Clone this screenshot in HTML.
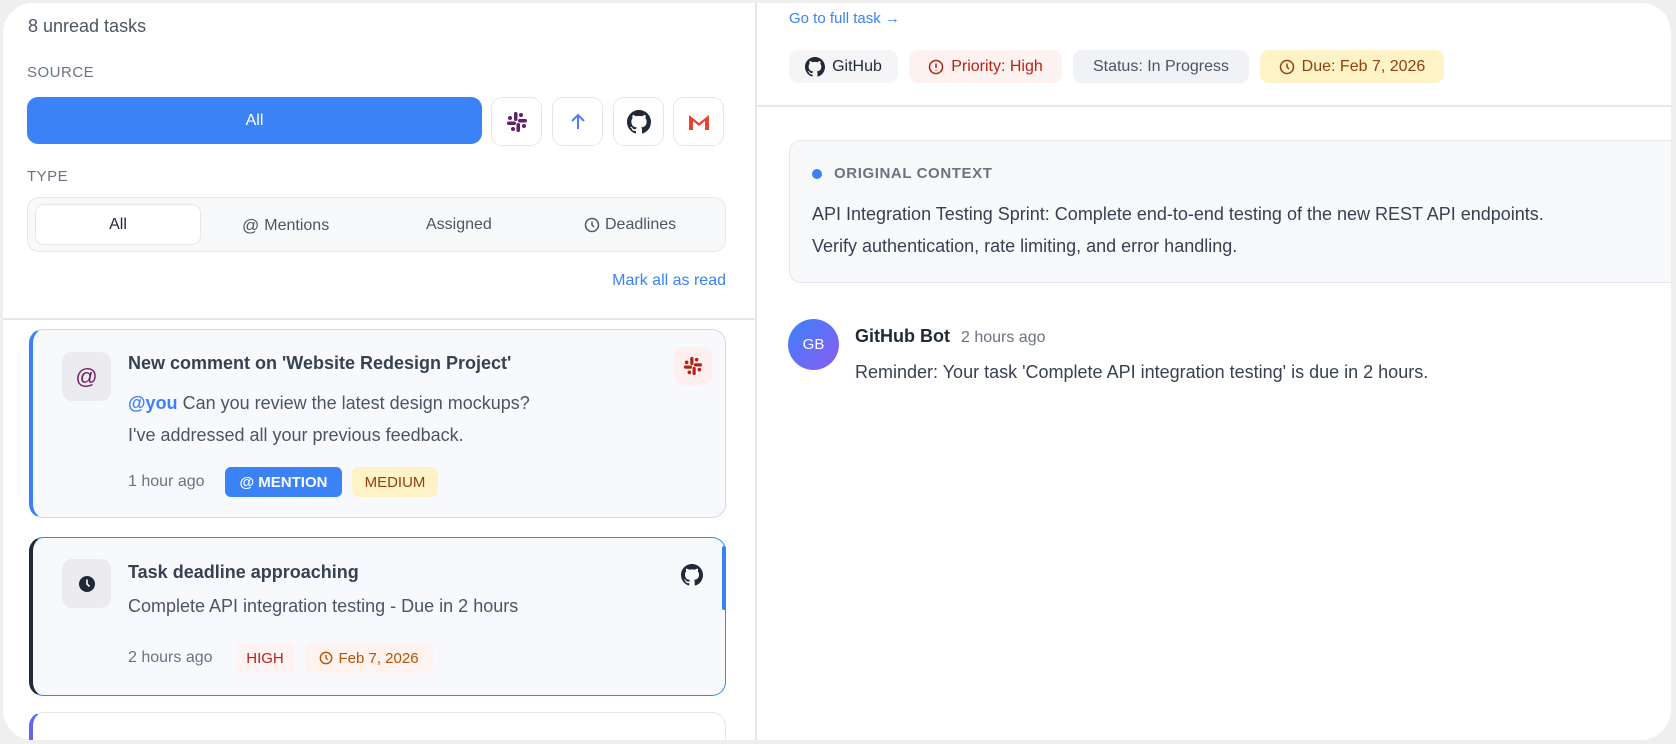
<!DOCTYPE html>
<html><head><meta charset="utf-8"><style>
*{box-sizing:border-box;margin:0;padding:0}
html,body{width:1676px;height:744px;overflow:hidden}
body{background:#efefef;font-family:"Liberation Sans",sans-serif;position:relative;color:#374151}
.frame{position:absolute;left:3px;top:3px;width:1668px;height:737px;background:#fff;border-radius:30px;overflow:hidden}
.a{position:absolute}
.lbl{font-size:15px;color:#6b7280;letter-spacing:.5px}
.ib{position:absolute;top:97px;width:51px;height:49px;border:1.5px solid #e5e7eb;border-radius:11px;background:#fff;display:flex;align-items:center;justify-content:center}
.seg{font-size:16px;color:#4b5563;position:absolute;top:216px;display:flex;align-items:center;gap:5px}
.card{position:absolute;left:26px;width:697px;border-radius:14px;background:#f7f9fd}
.t{font-size:18px;font-weight:bold;color:#374151}
.p{font-size:18px;color:#4b5563}
.badge{position:absolute;height:30px;border-radius:6px;font-size:15px;display:flex;align-items:center;justify-content:center;gap:5px}
.rb{position:absolute;top:50px;height:33px;border-radius:9px;font-size:16px;display:flex;align-items:center;justify-content:center;gap:7px}
</style></head><body>
<svg width="0" height="0" style="position:absolute"><defs><path id="gh" d="M8 0C3.58 0 0 3.58 0 8c0 3.54 2.29 6.53 5.47 7.59.4.07.55-.17.55-.38v-1.33c-2.23.48-2.7-1.07-2.7-1.07-.36-.92-.89-1.17-.89-1.17-.73-.5.05-.49.05-.49.8.06 1.23.83 1.23.83.71 1.23 1.87.87 2.33.67.07-.52.28-.87.5-1.07-1.78-.2-3.65-.89-3.65-3.95 0-.87.31-1.59.82-2.15-.08-.2-.36-1.02.08-2.12 0 0 .67-.21 2.2.82a7.6 7.6 0 0 1 4 0c1.53-1.04 2.2-.82 2.2-.82.44 1.1.16 1.92.08 2.12.51.56.82 1.27.82 2.15 0 3.07-1.87 3.75-3.65 3.95.29.25.54.73.54 1.48v2.2c0 .21.15.46.55.38A8 8 0 0 0 16 8c0-4.42-3.58-8-8-8z"/></defs></svg>
<div class="frame">
<div class="a" style="left:25px;top:13px;font-size:18px;color:#4b5563">8 unread tasks</div>
<div class="a lbl" style="left:24px;top:61px">SOURCE</div>
<div class="a" style="left:24px;top:94px;width:455px;height:47px;background:#3b82f6;border-radius:11px;color:#fff;font-size:16px;display:flex;align-items:center;justify-content:center">All</div>
</div>
<div class="ib" style="left:491px"><svg width="22" height="22" viewBox="0 0 22 22" fill="#611f69"><rect x="8" y="1" width="3.5" height="9" rx="1.7"/><rect x="12" y="8" width="9" height="3.5" rx="1.7"/><rect x="10.5" y="12" width="3.5" height="9" rx="1.7"/><rect x="1" y="10.5" width="9" height="3.5" rx="1.7"/><circle cx="15" cy="4" r="2"/><circle cx="18" cy="15" r="2"/><circle cx="7" cy="18" r="2"/><circle cx="4" cy="7" r="2"/></svg></div>
<div class="ib" style="left:552px"><svg width="20" height="20" viewBox="0 0 20 20" fill="none" stroke="#4f7cf7" stroke-width="2"><path d="M10 17V3M4 9l6-6 6 6"/></svg></div>
<div class="ib" style="left:613px"><svg width="24" height="24" viewBox="0 0 16 16" fill="#1f2937"><use href="#gh"/></svg></div>
<div class="ib" style="left:673px"><svg width="24" height="20" viewBox="0 0 24 20"><path d="M2 18V3l10 8 10-8v15h-4V9l-6 5-6-5v9z" fill="#ea4335"/></svg></div>
<div class="a lbl" style="left:27px;top:168px">TYPE</div>
<div class="a" style="left:27px;top:197px;width:699px;height:55px;background:#f8f9fb;border:1.5px solid #e5e7eb;border-radius:12px"></div>
<div class="a" style="left:35px;top:204px;width:166px;height:41px;background:#fff;border:1.5px solid #e5e7eb;border-radius:9px;font-size:16px;color:#1f2937;display:flex;align-items:center;justify-content:center">All</div>
<div class="seg" style="left:242px"><span style="font-size:17px">@</span>Mentions</div>
<div class="seg" style="left:426px">Assigned</div>
<div class="seg" style="left:584px"><svg width="16" height="16" viewBox="0 0 16 16" fill="none" stroke="#4b5563" stroke-width="1.5"><circle cx="8" cy="8" r="6.5"/><path d="M8 4.5V8l2 2"/></svg>Deadlines</div>
<div class="a" style="right:950px;top:272px;font-size:16px;color:#3b82f6">Mark all as read</div>
<div class="a" style="left:3px;top:318px;width:752px;height:1.5px;background:#e5e7eb"></div>

<div class="card" style="left:29px;top:329px;height:189px;border:1.5px solid #bfdbfe;border-left:4px solid #3b82f6">
 <div class="a" style="left:29px;top:22px;width:49px;height:49px;background:#ececf0;border-radius:10px;color:#6b2167;font-size:22px;display:flex;align-items:center;justify-content:center">@</div>
 <div class="a t" style="left:95px;top:23px">New comment on 'Website Redesign Project'</div>
 <div class="a p" style="left:95px;top:57px;line-height:32px"><b style="color:#3b82f6">@you</b> Can you review the latest design mockups?<br>I've addressed all your previous feedback.</div>
 <div class="a" style="left:95px;top:143px;font-size:16px;color:#6b7280">1 hour ago</div>
 <div class="badge" style="left:192px;top:137px;width:117px;background:#3b82f6;color:#fff;font-weight:bold">@ MENTION</div>
 <div class="badge" style="left:319px;top:137px;width:86px;background:#fef3c7;color:#92400e">MEDIUM</div>
 <div class="a" style="left:641px;top:17px;width:38px;height:38px;background:#fdf0ef;border-radius:9px;display:flex;align-items:center;justify-content:center"><svg width="20" height="20" viewBox="0 0 22 22" fill="#b42318"><rect x="8" y="1" width="3.5" height="9" rx="1.7"/><rect x="12" y="8" width="9" height="3.5" rx="1.7"/><rect x="10.5" y="12" width="3.5" height="9" rx="1.7"/><rect x="1" y="10.5" width="9" height="3.5" rx="1.7"/><circle cx="15" cy="4" r="2"/><circle cx="18" cy="15" r="2"/><circle cx="7" cy="18" r="2"/><circle cx="4" cy="7" r="2"/></svg></div>
</div>

<div class="card" style="left:29px;top:537px;height:159px;border:1.5px solid #3b82f6;border-left:4px solid #1f2937">
 <div class="a" style="left:29px;top:21px;width:49px;height:49px;background:#ececf0;border-radius:10px;display:flex;align-items:center;justify-content:center"><svg width="18" height="18" viewBox="0 0 18 18"><circle cx="9" cy="9" r="8" fill="#1f2937"/><path d="M9 4.5V9l2.5 2.5" stroke="#fff" stroke-width="1.6" fill="none"/></svg></div>
 <div class="a t" style="left:95px;top:24px">Task deadline approaching</div>
 <div class="a p" style="left:95px;top:58px">Complete API integration testing - Due in 2 hours</div>
 <div class="a" style="left:95px;top:111px;font-size:16px;color:#6b7280">2 hours ago</div>
 <div class="badge" style="left:203px;top:105px;width:58px;background:#fef2f2;color:#b42318">HIGH</div>
 <div class="badge" style="left:272px;top:105px;width:128px;background:#fef3ee;color:#b45309"><svg width="14" height="14" viewBox="0 0 16 16" fill="none" stroke="#b45309" stroke-width="1.6"><circle cx="8" cy="8" r="6.5"/><path d="M8 4.5V8l2 2"/></svg>Feb 7, 2026</div>
 <div class="a" style="left:640px;top:18px;width:38px;height:38px;display:flex;align-items:center;justify-content:center"><svg width="22" height="22" viewBox="0 0 16 16" fill="#1f2937"><use href="#gh"/></svg></div>
 <div class="a" style="left:689px;top:8px;width:4px;height:64px;background:#3b82f6;border-radius:2px"></div>
</div>
<div class="card" style="left:29px;top:712px;height:28px;border:1.5px solid #e5e7eb;border-bottom:none;border-left:4px solid #6366f1;border-radius:14px 14px 0 0;background:#fff"></div>
<div class="a" style="left:0;top:740px;width:1676px;height:4px;background:#efefef"></div>

<div class="a" style="left:755px;top:3px;width:1.5px;height:737px;background:#e5e7eb"></div>
<div class="a" style="left:789px;top:10px;font-size:15px;color:#3b82f6">Go to full task →</div>
<div class="rb" style="left:789px;width:109px;background:#f5f5f7;color:#1f2937"><svg width="20" height="20" viewBox="0 0 16 16" fill="#1f2937"><use href="#gh"/></svg>GitHub</div>
<div class="rb" style="left:909px;width:153px;background:#fef2f0;color:#b42318"><svg width="16" height="16" viewBox="0 0 16 16" fill="none" stroke="#b42318" stroke-width="1.5"><circle cx="8" cy="8" r="6.5"/><path d="M8 4.5v4.5M8 10.8v.8"/></svg>Priority: High</div>
<div class="rb" style="left:1073px;width:176px;background:#f1f2f5;color:#4b5563">Status: In Progress</div>
<div class="rb" style="left:1260px;width:184px;background:#fef3c7;color:#92400e"><svg width="16" height="16" viewBox="0 0 16 16" fill="none" stroke="#92400e" stroke-width="1.5"><circle cx="8" cy="8" r="6.5"/><path d="M8 4.5V8l2 2"/></svg>Due: Feb 7, 2026</div>
<div class="a" style="left:756px;top:105px;width:920px;height:1.5px;background:#e5e7eb"></div>
<div class="a" style="left:789px;top:140px;width:900px;height:143px;background:#f8f9fb;border:1.5px solid #e5e7eb;border-radius:12px"></div>
<div class="a" style="left:812px;top:169px;width:10px;height:10px;border-radius:50%;background:#3b82f6"></div>
<div class="a" style="left:834px;top:165px;font-size:15px;color:#6b7280;font-weight:bold;letter-spacing:.6px">ORIGINAL CONTEXT</div>
<div class="a" style="left:812px;top:198px;font-size:18px;color:#374151;line-height:32px">API Integration Testing Sprint: Complete end-to-end testing of the new REST API endpoints.<br>Verify authentication, rate limiting, and error handling.</div>
<div class="a" style="left:788px;top:319px;width:51px;height:51px;border-radius:50%;background:linear-gradient(135deg,#3b82f6,#8b5cf6);color:#fff;font-size:15px;display:flex;align-items:center;justify-content:center">GB</div>
<div class="a" style="left:855px;top:326px;font-size:18px;font-weight:bold;color:#1f2937">GitHub Bot <span style="font-weight:normal;font-size:16px;color:#6b7280;margin-left:6px">2 hours ago</span></div>
<div class="a" style="left:855px;top:362px;font-size:18px;color:#374151">Reminder: Your task 'Complete API integration testing' is due in 2 hours.</div>
<div class="a" style="left:1671px;top:0;width:5px;height:744px;background:#efefef"></div>
</body></html>
